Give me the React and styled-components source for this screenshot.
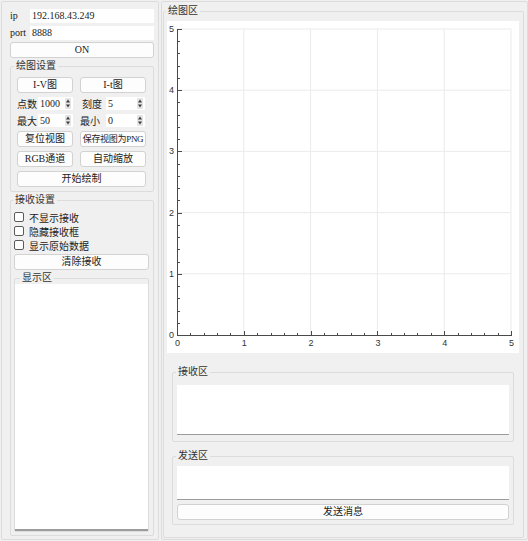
import React from 'react';
import styled, { createGlobalStyle } from 'styled-components';

const GlobalStyle = createGlobalStyle`
  html, body {
    margin: 0;
    padding: 0;
    background: #f0f0f0;
  }
  body {
    font-family: "Liberation Serif", "Noto Sans CJK SC", serif;
    font-size: 10px;
    color: #222;
  }
  * {
    box-sizing: border-box;
  }
`;

const Window = styled.div`
  display: flex;
  gap: 2px;
  width: 528px;
  height: 541px;
  padding: 1px 0 1px 1px;
`;

const LeftPane = styled.div`
  width: 158px;
  border: 1px solid #dcdcdc;
  border-radius: 2px;
  padding: 7px 4px 3px 8px;
  display: flex;
  flex-direction: column;
`;

const RightPane = styled.div`
  width: 367px;
  border: 1px solid #dcdcdc;
  border-radius: 2px;
  padding: 3px 3px 1px 1px;
  display: flex;
  flex-direction: column;
`;

const FieldRow = styled.div`
  display: flex;
  align-items: center;
  height: 14px;
  margin-bottom: ${(p) => p.$gap || 0}px;
`;

const FieldLabel = styled.span`
  width: 20px;
  flex: none;
  line-height: 14px;
`;

const TextInput = styled.div`
  flex: 1;
  height: 14px;
  background: #fff;
  padding-left: 2px;
  line-height: 14px;
  white-space: nowrap;
`;

const Button = styled.button`
  display: block;
  height: 16px;
  margin: ${(p) => p.$margin || '0'};
  border: 1px solid #d2d2d2;
  border-radius: 3px;
  background: #fdfdfd;
  font: inherit;
  font-size: ${(p) => (p.$tight ? '9px' : '10px')};
  line-height: 14px;
  letter-spacing: ${(p) => (p.$tight ? '-0.3px' : 'normal')};
  white-space: nowrap;
  overflow: visible;
  color: #222;
  padding: 0;
  grid-column: ${(p) => (p.$span ? '1 / span 2' : 'auto')};
  width: ${(p) => (p.$full ? '100%' : 'auto')};
`;

const Group = styled.fieldset`
  margin: ${(p) => p.$margin || '0'};
  border: 1px solid #dcdcdc;
  border-radius: 2px;
  padding: ${(p) => p.$pad || '0'};
  min-width: 0;
  min-height: 0;
  display: flex;
  flex-direction: column;
  flex: ${(p) => (p.$grow ? '1' : 'none')};
`;

const Legend = styled.legend`
  margin-left: ${(p) => p.$indent ?? -1}px;
  padding: 0 2px;
  font-size: 10px;
  line-height: 12px;
  color: #333;
`;

const ControlGrid = styled.div`
  display: grid;
  grid-template-columns: 56px 66px;
  grid-auto-rows: auto;
  column-gap: 7px;
  row-gap: 4px;
`;

const SpinCell = styled.div`
  display: flex;
  align-items: center;
  height: 13px;
`;

const SpinLabel = styled.span`
  width: ${(p) => p.$w}px;
  padding-left: ${(p) => p.$pl || 0}px;
  flex: none;
  white-space: nowrap;
`;

const SpinBox = styled.div`
  display: flex;
  align-items: center;
  width: ${(p) => p.$w}px;
  height: 13px;
  background: #fff;
  padding: 0 2px 0 2px;
  line-height: 13px;
`;

const SpinValue = styled.span`
  flex: 1;
`;

const CheckRow = styled.label`
  display: flex;
  align-items: center;
  height: 14px;
  gap: 5px;
  padding-left: 0;
`;

const CheckBox = styled.span`
  width: 10px;
  height: 10px;
  border: 1px solid #5a5a5a;
  border-radius: 2px;
  background: #fff;
  flex: none;
`;

const TextArea = styled.div`
  background: #fff;
  height: ${(p) => (p.$h ? `${p.$h}px` : 'auto')};
  flex: ${(p) => (p.$h ? 'none' : '1')};
  border-bottom: ${(p) => p.$line || 1}px solid #9c9c9c;
`;

const PlotBox = styled.div`
  height: 332px;
  background: #fff;
  flex: none;
`;

const SpinArrows = () => (
  <svg width="6" height="11" viewBox="0 0 6 11">
    <rect x="0" y="0" width="6" height="11" rx="1" fill="#e4e4e4" />
    <path d="M1 4.5 L3 1.5 L5 4.5 Z" fill="#3c3c3c" />
    <path d="M1 6.5 L3 9.5 L5 6.5 Z" fill="#3c3c3c" />
  </svg>
);

const Spin = ({ label, value, labelW, boxW, pl }) => (
  <SpinCell>
    <SpinLabel $w={labelW} $pl={pl}>{label}</SpinLabel>
    <SpinBox $w={boxW}>
      <SpinValue>{value}</SpinValue>
      <SpinArrows />
    </SpinBox>
  </SpinCell>
);

const W = 352;
const H = 332;
const X0 = 10;
const X1 = 344;
const Y0 = 314;
const Y1 = 8;

const Plot = () => {
  const dx = (X1 - X0) / 5;
  const dy = (Y0 - Y1) / 5;
  const majors = [0, 1, 2, 3, 4, 5];
  const minors = Array.from({ length: 26 }, (_, i) => i);
  return (
    <svg width={W} height={H} viewBox={`0 0 ${W} ${H}`} style={{ display: 'block' }}>
      {majors.slice(1).map((i) => (
        <line key={`gx${i}`} x1={X0 + i * dx} y1={Y1} x2={X0 + i * dx} y2={Y0} stroke="#ebebeb" strokeWidth="1" />
      ))}
      {majors.slice(1).map((i) => (
        <line key={`gy${i}`} x1={X0} y1={Y0 - i * dy} x2={X1} y2={Y0 - i * dy} stroke="#ebebeb" strokeWidth="1" />
      ))}
      <line x1={X0 + 0.5} y1={Y1} x2={X0 + 0.5} y2={Y0 + 0.5} stroke="#4a4a4a" strokeWidth="1" />
      <line x1={X0} y1={Y0 + 0.5} x2={X1 + 0.5} y2={Y0 + 0.5} stroke="#4a4a4a" strokeWidth="1" />
      {minors.map((k) => {
        const len = k % 5 === 0 ? 4 : 2;
        const y = Math.round(Y0 - (k * dy) / 5) + 0.5;
        const x = Math.round(X0 + (k * dx) / 5) + 0.5;
        return (
          <g key={`t${k}`}>
            <line x1={X0} y1={y} x2={X0 + 1 + len} y2={y} stroke="#4a4a4a" strokeWidth="1" />
            <line x1={x} y1={Y0 + 1} x2={x} y2={Y0 - len} stroke="#4a4a4a" strokeWidth="1" />
          </g>
        );
      })}
      {majors.map((i) => (
        <text
          key={`ly${i}`}
          x={X0 - 3}
          y={Y0 - i * dy + 3}
          textAnchor="end"
          fontFamily="Liberation Sans, sans-serif"
          fontSize="9"
          fill="#333"
        >
          {i}
        </text>
      ))}
      {majors.map((i) => (
        <text
          key={`lx${i}`}
          x={X0 + i * dx + 0.5}
          y={Y0 + 11}
          textAnchor="middle"
          fontFamily="Liberation Sans, sans-serif"
          fontSize="9"
          fill="#333"
        >
          {i}
        </text>
      ))}
    </svg>
  );
};

export default function App() {
  return (
    <>
      <GlobalStyle />
      <Window>
        <LeftPane>
          <FieldRow $gap={3}>
            <FieldLabel>ip</FieldLabel>
            <TextInput>192.168.43.249</TextInput>
          </FieldRow>
          <FieldRow $gap={2}>
            <FieldLabel>port</FieldLabel>
            <TextInput>8888</TextInput>
          </FieldRow>
          <Button $full>ON</Button>

          <Group $margin="2px 0 0" $pad="5px 7px 4px 6px">
            <Legend $indent={-3}>绘图设置</Legend>
            <ControlGrid>
              <Button>I-V图</Button>
              <Button>I-t图</Button>
              <Spin label="点数" value="1000" labelW={21} boxW={36} />
              <Spin label="刻度" value="5" labelW={26} boxW={39} pl={2} />
              <Spin label="最大" value="50" labelW={21} boxW={36} />
              <Spin label="最小" value="0" labelW={26} boxW={39} pl={0} />
              <Button>复位视图</Button>
              <Button $tight>保存视图为PNG</Button>
              <Button>RGB通道</Button>
              <Button>自动缩放</Button>
              <Button $span>开始绘制</Button>
            </ControlGrid>
          </Group>

          <Group $margin="2px 0 0" $pad="4px 4px 3px 3px" $grow>
            <Legend>接收设置</Legend>
            <CheckRow>
              <CheckBox />
              不显示接收
            </CheckRow>
            <CheckRow>
              <CheckBox />
              隐藏接收框
            </CheckRow>
            <CheckRow>
              <CheckBox />
              显示原始数据
            </CheckRow>
            <Button $full $margin="2px 0 0">清除接收</Button>
            <Group $margin="2px 0 0" $grow>
              <Legend $indent={5}>显示区</Legend>
              <TextArea $line={2} />
            </Group>
          </Group>
        </LeftPane>

        <RightPane>
          <Group $grow $pad="4px 4px 0 3px">
            <Legend>绘图区</Legend>
            <PlotBox>
              <Plot />
            </PlotBox>
            <Group $margin="13px 5px 0" $pad="7px 4px 6px 4px">
              <Legend>接收区</Legend>
              <TextArea $h={50} />
            </Group>
            <Group $margin="8px 5px 0" $pad="4px 4px 4px 4px">
              <Legend>发送区</Legend>
              <TextArea $h={34} />
              <Button $full $margin="4px 0 0">发送消息</Button>
            </Group>
          </Group>
        </RightPane>
      </Window>
    </>
  );
}
